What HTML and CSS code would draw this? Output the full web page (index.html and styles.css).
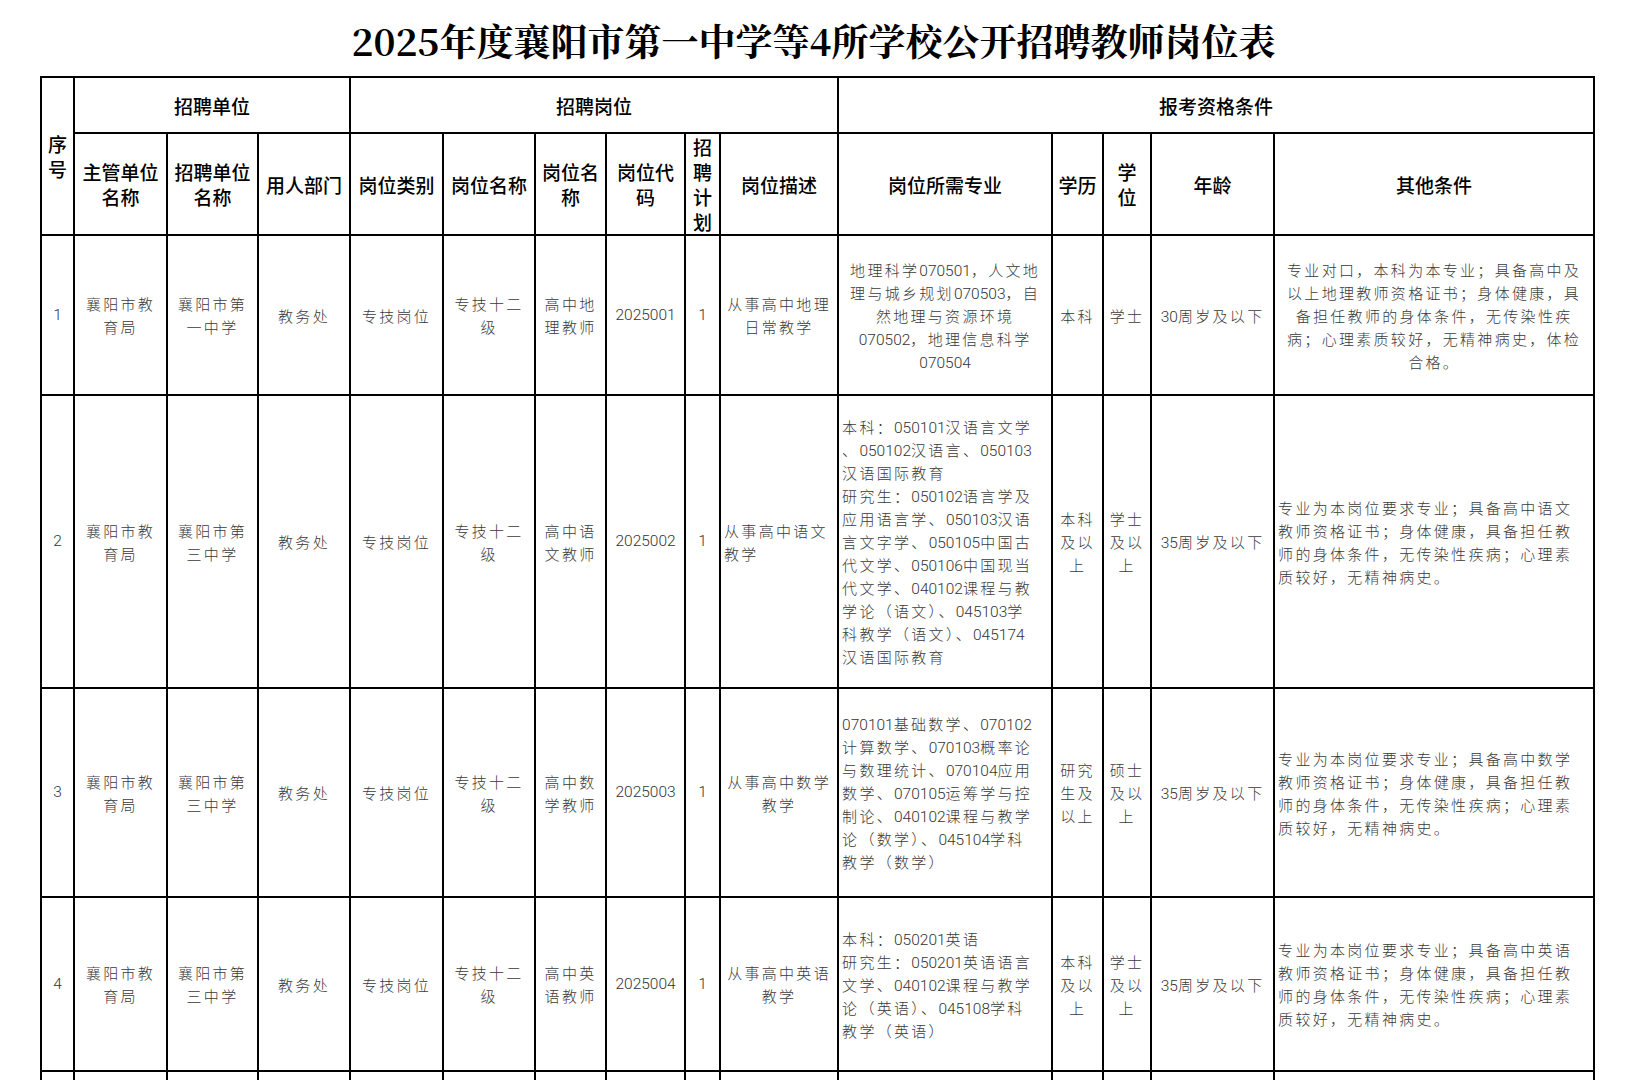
FILE: index.html
```html
<!DOCTYPE html>
<html lang="zh-CN">
<head>
<meta charset="utf-8">
<title>2025年度襄阳市第一中学等4所学校公开招聘教师岗位表</title>
<link rel="stylesheet" href="styles.css">
</head>
<body>
<div class="page">
  <h1 class="title">2025年度襄阳市第一中学等4所学校公开招聘教师岗位表</h1>
  <table class="sheet">
    <colgroup>
      <col class="c1"><col class="c2"><col class="c3"><col class="c4"><col class="c5">
      <col class="c6"><col class="c7"><col class="c8"><col class="c9"><col class="c10">
      <col class="c11"><col class="c12"><col class="c13"><col class="c14"><col class="c15">
    </colgroup>
    <thead>
      <tr class="h1row">
        <th rowspan="2">序<br>号</th>
        <th colspan="3">招聘单位</th>
        <th colspan="6">招聘岗位</th>
        <th colspan="5">报考资格条件</th>
      </tr>
      <tr class="h2row">
        <th>主管单位<br>名称</th>
        <th>招聘单位<br>名称</th>
        <th>用人部门</th>
        <th>岗位类别</th>
        <th>岗位名称</th>
        <th>岗位名<br>称</th>
        <th>岗位代<br>码</th>
        <th>招<br>聘<br>计<br>划</th>
        <th>岗位描述</th>
        <th>岗位所需专业</th>
        <th>学历</th>
        <th>学<br>位</th>
        <th>年龄</th>
        <th>其他条件</th>
      </tr>
    </thead>
    <tbody>
      <tr class="r1">
        <td class="num">1</td>
        <td>襄阳市教<br>育局</td>
        <td>襄阳市第<br>一中学</td>
        <td>教务处</td>
        <td>专技岗位</td>
        <td>专技十二<br>级</td>
        <td>高中地<br>理教师</td>
        <td class="num">2025001</td>
        <td class="num">1</td>
        <td>从事高中地理<br>日常教学</td>
        <td>地理科学<span class="d">070501</span>，人文地<br>理与城乡规划<span class="d">070503</span>，自<br>然地理与资源环境<br><span class="d">070502</span>，地理信息科学<br><span class="d">070504</span></td>
        <td>本科</td>
        <td>学士</td>
        <td><span class="d">30</span>周岁及以下</td>
        <td>专业对口，本科为本专业；具备高中及<br>以上地理教师资格证书；身体健康，具<br>备担任教师的身体条件，无传染性疾<br>病；心理素质较好，无精神病史，体检<br>合格。</td>
      </tr>
      <tr class="r2">
        <td class="num">2</td>
        <td>襄阳市教<br>育局</td>
        <td>襄阳市第<br>三中学</td>
        <td>教务处</td>
        <td>专技岗位</td>
        <td>专技十二<br>级</td>
        <td>高中语<br>文教师</td>
        <td class="num">2025002</td>
        <td class="num">1</td>
        <td class="left">从事高中语文<br>教学</td>
        <td class="left">本科：<span class="d">050101</span>汉语言文学<br>、<span class="d">050102</span>汉语言、<span class="d">050103</span><br>汉语国际教育<br>研究生：<span class="d">050102</span>语言学及<br>应用语言学、<span class="d">050103</span>汉语<br>言文字学、<span class="d">050105</span>中国古<br>代文学、<span class="d">050106</span>中国现当<br>代文学、<span class="d">040102</span>课程与教<br>学论（语文）、<span class="d">045103</span>学<br>科教学（语文）、<span class="d">045174</span><br>汉语国际教育</td>
        <td>本科<br>及以<br>上</td>
        <td>学士<br>及以<br>上</td>
        <td><span class="d">35</span>周岁及以下</td>
        <td class="left">专业为本岗位要求专业；具备高中语文<br>教师资格证书；身体健康，具备担任教<br>师的身体条件，无传染性疾病；心理素<br>质较好，无精神病史。</td>
      </tr>
      <tr class="r3">
        <td class="num">3</td>
        <td>襄阳市教<br>育局</td>
        <td>襄阳市第<br>三中学</td>
        <td>教务处</td>
        <td>专技岗位</td>
        <td>专技十二<br>级</td>
        <td>高中数<br>学教师</td>
        <td class="num">2025003</td>
        <td class="num">1</td>
        <td>从事高中数学<br>教学</td>
        <td class="left"><span class="d">070101</span>基础数学、<span class="d">070102</span><br>计算数学、<span class="d">070103</span>概率论<br>与数理统计、<span class="d">070104</span>应用<br>数学、<span class="d">070105</span>运筹学与控<br>制论、<span class="d">040102</span>课程与教学<br>论（数学）、<span class="d">045104</span>学科<br>教学（数学）</td>
        <td>研究<br>生及<br>以上</td>
        <td>硕士<br>及以<br>上</td>
        <td><span class="d">35</span>周岁及以下</td>
        <td class="left">专业为本岗位要求专业；具备高中数学<br>教师资格证书；身体健康，具备担任教<br>师的身体条件，无传染性疾病；心理素<br>质较好，无精神病史。</td>
      </tr>
      <tr class="r4">
        <td class="num">4</td>
        <td>襄阳市教<br>育局</td>
        <td>襄阳市第<br>三中学</td>
        <td>教务处</td>
        <td>专技岗位</td>
        <td>专技十二<br>级</td>
        <td>高中英<br>语教师</td>
        <td class="num">2025004</td>
        <td class="num">1</td>
        <td>从事高中英语<br>教学</td>
        <td class="left">本科：<span class="d">050201</span>英语<br>研究生：<span class="d">050201</span>英语语言<br>文学、<span class="d">040102</span>课程与教学<br>论（英语）、<span class="d">045108</span>学科<br>教学（英语）</td>
        <td>本科<br>及以<br>上</td>
        <td>学士<br>及以<br>上</td>
        <td><span class="d">35</span>周岁及以下</td>
        <td class="left">专业为本岗位要求专业；具备高中英语<br>教师资格证书；身体健康，具备担任教<br>师的身体条件，无传染性疾病；心理素<br>质较好，无精神病史。</td>
      </tr>
      <tr class="r5">
        <td></td><td></td><td></td><td></td><td></td>
        <td></td><td></td><td></td><td></td><td></td>
        <td></td><td></td><td></td><td></td><td></td>
      </tr>
    </tbody>
  </table>
</div>
</body>
</html>
```

FILE: styles.css
```css
html, body {
  margin: 0;
  padding: 0;
  background: #ffffff;
}

.page {
  padding-left: 40px;
  width: 1555px;
}

.title {
  margin: 0;
  height: 72px;
  padding-top: 4px;
  line-height: 72px;
  text-align: center;
  font-family: "Noto Serif CJK SC", "Liberation Serif", "Noto Sans CJK SC", serif;
  font-size: 37px;
  font-weight: 700;
  color: #000;
  letter-spacing: 0;
  padding-right: 8px;
}

.sheet {
  border-collapse: collapse;
  table-layout: fixed;
  width: 1553px;
}

.c1 { width: 33px; }
.c2 { width: 93px; }
.c3 { width: 91px; }
.c4 { width: 92px; }
.c5 { width: 93px; }
.c6 { width: 92px; }
.c7 { width: 71px; }
.c8 { width: 79px; }
.c9 { width: 35px; }
.c10 { width: 118px; }
.c11 { width: 214px; }
.c12 { width: 51px; }
.c13 { width: 48px; }
.c14 { width: 123px; }
.c15 { width: 320px; }

.sheet th,
.sheet td {
  border: 2px solid #000;
  padding: 0 4px;
  text-align: center;
  vertical-align: middle;
  white-space: nowrap;
  overflow: hidden;
}

.sheet th {
  font-family: "Noto Sans CJK SC", sans-serif;
  font-size: 19px;
  font-weight: 500;
  line-height: 25px;
  color: #000;
  padding: 0 2px;
}

.h1row { height: 56px; }
.h2row { height: 99px; }

.sheet td {
  font-family: "Noto Sans CJK SC", sans-serif;
  font-size: 15px;
  font-weight: 300;
  line-height: 23px;
  letter-spacing: 2.3px;
  color: #3a3a3a;
}

.sheet td.left {
  text-align: left;
  padding-left: 3px;
}

.d {
  font-family: "Roboto", "Liberation Sans", sans-serif;
  font-size: 15.5px;
  line-height: 10px;
  letter-spacing: 0;
  font-weight: 300;
  color: #333;
}

.sheet td.num {
  font-family: "Roboto", "Liberation Sans", sans-serif;
  font-size: 15.5px;
  letter-spacing: 0;
  font-weight: 300;
  color: #333;
}

.r1 { height: 160px; }
.r2 { height: 293px; }
.r3 { height: 209px; }
.r4 { height: 174px; }
.r5 { height: 120px; }
```
